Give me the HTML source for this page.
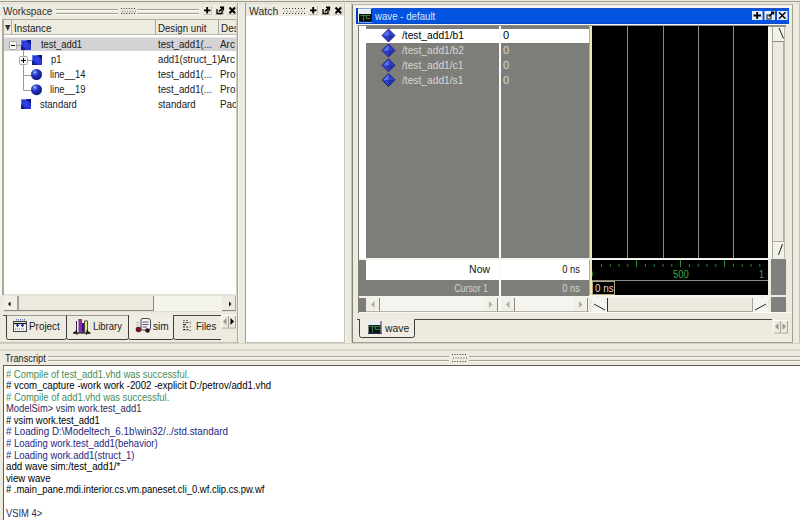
<!DOCTYPE html>
<html><head><meta charset="utf-8">
<style>
*{margin:0;padding:0;box-sizing:border-box}
html,body{width:800px;height:520px;overflow:hidden;background:#EDEADF;font-family:"Liberation Sans",sans-serif;font-size:10px;color:#000}
.a{position:absolute}
.t{position:absolute;white-space:pre;line-height:1;font-size:11px;transform-origin:0 0}
svg{position:absolute;overflow:visible}
</style></head><body>
<!-- top line -->
<div class="a" style="left:0;top:1px;width:800px;height:1px;background:#9A988C"></div>
<div class="a" style="left:0;top:3px;width:800px;height:1px;background:#E2DFD0"></div>

<!-- ===== WORKSPACE PANE ===== -->
<div class="t" style="left:3px;top:6px;color:#303030;transform:scaleX(0.9)">Workspace</div>
<svg style="left:0;top:0" width="800" height="20">
 <g stroke="#A19F92" stroke-width="1">
  <path d="M56 9.5H118M137 9.5H199M56 13.5H118M137 13.5H199"/>
 </g>
 <g stroke="#FFFFFF" stroke-width="1">
  <path d="M56 10.5H118M137 10.5H199M56 14.5H118M137 14.5H199"/>
 </g>
 <g fill="#333">
  <rect x="121" y="8" width="1" height="1"/><rect x="123.6" y="8" width="1" height="1"/><rect x="126.2" y="8" width="1" height="1"/><rect x="128.8" y="8" width="1" height="1"/><rect x="131.4" y="8" width="1" height="1"/><rect x="134" y="8" width="1" height="1"/>
  <rect x="121" y="13" width="1" height="1"/><rect x="123.6" y="13" width="1" height="1"/><rect x="126.2" y="13" width="1" height="1"/><rect x="128.8" y="13" width="1" height="1"/><rect x="131.4" y="13" width="1" height="1"/><rect x="134" y="13" width="1" height="1"/>
 </g>
 <g fill="#999">
  <rect x="122" y="10.5" width="1" height="2"/><rect x="124.6" y="10.5" width="1" height="2"/><rect x="127.2" y="10.5" width="1" height="2"/><rect x="129.8" y="10.5" width="1" height="2"/><rect x="132.4" y="10.5" width="1" height="2"/><rect x="135" y="10.5" width="1" height="2"/>
 </g>
 <!-- buttons -->
 <g id="wsbtn">
  <path d="M211.5 6V14.5H203" stroke="#C8C6BA" fill="none"/>
  <path d="M204 10.3H210.5M207.2 7V13.5" stroke="#000" stroke-width="1.8"/>
  <path d="M223.5 6V14.5H215" stroke="#C8C6BA" fill="none"/>
  <path d="M217 9V13.5H222V10" stroke="#000" stroke-width="1.3" fill="none"/>
  <path d="M219 11.5L223 7.5M220 7.3H223.3V10.5" stroke="#000" stroke-width="1.6" fill="none"/>
  <path d="M236 6V14.5H227.5" stroke="#C8C6BA" fill="none"/>
  <path d="M229.5 7.5L235 13.3M235 7.5L229.5 13.3" stroke="#000" stroke-width="2"/>
 </g>
</svg>

<!-- table -->
<div class="a" style="left:0;top:16px;width:2px;height:280px;background:#F6F5EE"></div><div class="a" style="left:2px;top:19px;width:236px;height:276px;background:#fff;border-left:2px solid #ABA99E;border-top:1px solid #AFADA0;border-right:2px solid #C9C7BA"></div>
<div class="a" style="left:4px;top:20px;width:232px;height:15px;background:#EEEBE0;border-bottom:1px solid #BDBBAE"></div>
<div class="a" style="left:11px;top:20px;width:1px;height:14px;background:#B0AEA2"></div>
<div class="a" style="left:155px;top:20px;width:1px;height:14px;background:#A8A69A"></div>
<div class="a" style="left:218px;top:20px;width:1px;height:14px;background:#A8A69A"></div>
<svg style="left:0;top:0" width="20" height="40"><path d="M5 25H10.5L7.75 31Z" fill="#333"/></svg>
<div class="t" style="left:14px;top:23px;color:#202020;transform:scaleX(0.9)">Instance</div>
<div class="t" style="left:158px;top:23px;color:#202020;transform:scaleX(0.88)">Design unit</div>
<div class="t" style="left:221px;top:23px;color:#202020;transform:scaleX(0.9)">Des</div>
<div class="a" style="left:236px;top:20px;width:2px;height:15px;background:#EDEADF"></div>

<!-- rows -->
<div class="a" style="left:4px;top:37px;width:232px;height:1px;background:#E6E4E4"></div><div class="a" style="left:4px;top:38px;width:232px;height:13px;background:#D4D2D5"></div>
<svg style="left:0;top:0" width="240" height="120">
 <defs>
  <linearGradient id="sq" x1="0" y1="0" x2="1" y2="1">
   <stop offset="0" stop-color="#6F8DF5"/><stop offset="0.35" stop-color="#2A4EE8"/><stop offset="0.7" stop-color="#1E3CD8"/><stop offset="1" stop-color="#0A1C8C"/>
  </linearGradient>
  <radialGradient id="ball" cx="0.35" cy="0.3" r="0.75">
   <stop offset="0" stop-color="#D0DCFF"/><stop offset="0.18" stop-color="#5068E0"/><stop offset="0.45" stop-color="#2232C0"/><stop offset="1" stop-color="#0C1478"/>
  </radialGradient>
  <g id="bsq">
   <rect x="0" y="0" width="10" height="10" fill="#2838D4"/>
   <path d="M0 0H10L9 1H1V9L0 10Z" fill="#6080F0"/>
   <path d="M10 0V5L5 0Z" fill="#0E1884"/>
   <path d="M0 10V5L5 10Z" fill="#12208E"/>
   <path d="M3 3H7V7H3Z" fill="#3048E8" opacity="0.7"/>
  </g>
 </defs>
 <!-- tree lines -->
 <g stroke="#9A9A96" stroke-width="1" fill="none">
  <path d="M16.5 45.5H21"/>
  <path d="M23.5 50V57"/>
  <path d="M23.5 64V90.5H31M23.5 75.5H31"/>
  <path d="M27.5 60.5H32"/>
 </g>
 <!-- minus box -->
 <rect x="9.5" y="41.5" width="7" height="8" rx="1" fill="#F6F6F2" stroke="#A9A9A2"/>
 <path d="M11 45.5H15" stroke="#000"/>
 <use href="#bsq" x="21" y="40"/>
 <!-- plus box -->
 <rect x="19.5" y="56.5" width="8" height="8" rx="1" fill="#F6F6F2" stroke="#A9A9A2"/>
 <path d="M21 60.5H26M23.5 58V63" stroke="#000"/>
 <use href="#bsq" x="32" y="55"/>
 <circle cx="36.5" cy="74.5" r="5.5" fill="url(#ball)"/>
 <circle cx="36.5" cy="89.7" r="5.5" fill="url(#ball)"/>
 <use href="#bsq" x="21" y="99"/>
</svg>
<div class="t" style="left:41px;top:39px;color:#202020;transform:scaleX(0.85)">test_add1</div>
<div class="t" style="left:51px;top:54px;color:#202020;transform:scaleX(0.85)">p1</div>
<div class="t" style="left:50px;top:69px;color:#202020;transform:scaleX(0.85)">line__14</div>
<div class="t" style="left:50px;top:84px;color:#202020;transform:scaleX(0.85)">line__19</div>
<div class="t" style="left:40px;top:99px;color:#202020;transform:scaleX(0.86)">standard</div>
<div class="t" style="left:158px;top:39px;color:#202020;transform:scaleX(0.88)">test_add1(...</div>
<div class="t" style="left:158px;top:54px;color:#202020;transform:scaleX(0.88)">add1(struct_1)</div>
<div class="t" style="left:158px;top:69px;color:#202020;transform:scaleX(0.88)">test_add1(...</div>
<div class="t" style="left:158px;top:84px;color:#202020;transform:scaleX(0.88)">test_add1(...</div>
<div class="t" style="left:158px;top:99px;color:#202020;transform:scaleX(0.88)">standard</div>
<div class="a" style="left:219px;top:37px;width:17px;height:80px;overflow:hidden">
 <div class="t" style="left:1px;top:2px;color:#202020;transform:scaleX(0.9)">Arc</div>
 <div class="t" style="left:1px;top:17px;color:#202020;transform:scaleX(0.9)">Arc</div>
 <div class="t" style="left:1px;top:32px;color:#202020;transform:scaleX(0.9)">Pro</div>
 <div class="t" style="left:1px;top:47px;color:#202020;transform:scaleX(0.9)">Pro</div>
 <div class="t" style="left:1px;top:62px;color:#202020;transform:scaleX(0.9)">Pac</div>
</div>

<!-- ws scrollbar -->
<div class="a" style="left:4px;top:294px;width:232px;height:2px;background:#E6E4DA"></div>
<div class="a" style="left:4px;top:296px;width:232px;height:15px;background:#F4F3EC"></div>
<div class="a" style="left:4px;top:296px;width:13px;height:15px;background:#F0EFE8;border-bottom:1px solid #8E8C80"></div>
<div class="a" style="left:17px;top:296px;width:137px;height:15px;background:#EDEADF;border-left:2px solid #A4A296;border-right:1px solid #8A887C;border-bottom:1px solid #8A887C"></div>
<div class="a" style="left:222px;top:296px;width:14px;height:15px;background:#EDEADF;border-right:1px solid #A8A698;border-bottom:1px solid #8A887C"></div>
<svg style="left:0;top:0" width="240" height="320"><path d="M8 304L10.5 301.5V306.5Z" fill="#000"/><path d="M231.5 304L229 301.5V306.5Z" fill="#000"/></svg>
<div class="a" style="left:2px;top:311px;width:236px;height:1px;background:#E0DED2"></div>
<!-- tabs -->
<svg style="left:0;top:0" width="240" height="345">
 <path d="M3 315.5H128" stroke="#4A4840" stroke-width="1"/>
 <path d="M173 315.5H221" stroke="#4A4840" stroke-width="1"/>
 <!-- project tab -->
 <path d="M6.5 315.5V337.5Q6.5 339.5 8.5 339.5H64.5Q66.5 339.5 66.5 337.5V315.5" fill="#EDEADF" stroke="#3E3C36"/>
 <!-- library -->
 <path d="M66.5 315.5V337.5Q66.5 339.5 68.5 339.5H126.5Q128.5 339.5 128.5 337.5V315.5" fill="#EDEADF" stroke="#3E3C36"/>
 <!-- sim (selected) -->
 <path d="M128.5 315V337.5Q128.5 339.5 130.5 339.5H171.5Q173.5 339.5 173.5 337.5V315" fill="#F0EEE4" stroke="#3E3C36"/>
 <!-- files -->
 <path d="M173.5 315.5V337.5Q173.5 339.5 175.5 339.5H221" fill="#EDEADF" stroke="#3E3C36"/>
 <!-- project icon -->
 <g>
  <rect x="13.5" y="321.5" width="13" height="10" fill="#F4F4F0" stroke="#444"/>
  <rect x="16" y="319" width="1" height="1.5" fill="#6A76C0"/><rect x="18" y="319" width="1" height="1.5" fill="#6A76C0"/><rect x="20" y="319" width="1" height="1.5" fill="#6A76C0"/><rect x="22" y="319" width="1" height="1.5" fill="#6A76C0"/><rect x="24" y="319" width="1" height="1.5" fill="#6A76C0"/>
  <path d="M14 323.5H26" stroke="#111" stroke-width="1.2"/>
  <circle cx="17.5" cy="325.3" r="1.2" fill="#1A2A9A"/><circle cx="22.5" cy="325.3" r="1.2" fill="#1A2A9A"/>
  <path d="M17.5 323V327M22.5 323V327" stroke="#1A2A9A" stroke-width="1"/>
  <path d="M15 329H25" stroke="#99A" stroke-width="1.5" stroke-dasharray="1 1"/>
 </g>
 <!-- library icon -->
 <g>
  <rect x="76" y="321" width="2.5" height="11.5" fill="#F0ECF4"/>
  <path d="M76.5 321V332" stroke="#2A2A40" stroke-width="1"/>
  <rect x="78.5" y="319" width="3.5" height="13.5" fill="#902A9A"/>
  <rect x="78.5" y="319" width="3.5" height="1.5" fill="#A03070"/>
  <rect x="82" y="323" width="2.5" height="9.5" fill="#2A1890"/>
  <rect x="84.5" y="321" width="3" height="11.5" fill="#E8E880"/>
  <path d="M84.5 321V332.5M87.5 321V332.5M84.5 320.8H87.5" stroke="#303030" stroke-width="0.8" fill="none"/>
  <path d="M73 333.5L77 329.5V333.5ZM90.5 333.5L86.5 329.5V333.5Z" fill="#111"/>
  <path d="M73 333H90.5" stroke="#111" stroke-width="1.2"/>
  <path d="M77 333V335M86.5 333V335" stroke="#222" stroke-width="1"/>
 </g>
 <!-- sim icon -->
 <g>
  <path d="M141 320Q141 318.5 143 318.5H148Q150.5 318.5 150.5 321V328.5Q150.5 330 149 330H141Z" fill="#F2F2F8" stroke="#3A3A3A" stroke-width="0.9"/>
  <path d="M142.5 322H148.5M142.5 324.5H148.5M142.5 327H147" stroke="#5A5A6A" stroke-width="1"/>
  <path d="M136.5 322.5H138.5M136.5 325H138.5M136.5 327.5H138.5" stroke="#9A9A9A" stroke-width="0.9"/>
  <circle cx="138.5" cy="329.5" r="2.8" fill="#6A1828"/>
  <circle cx="147.5" cy="330.5" r="2.3" fill="#2E161A"/>
 </g>
 <!-- files icon -->
 <g>
  <rect x="183" y="320" width="2" height="1" fill="#777"/><rect x="186" y="320" width="2" height="1" fill="#777"/>
  <rect x="183" y="322" width="1.5" height="1" fill="#555"/><rect x="185.5" y="322" width="3" height="1" fill="#444"/><rect x="189.5" y="321.5" width="1.5" height="1.5" fill="#999"/>
  <rect x="183" y="324" width="3" height="1.2" fill="#222"/><rect x="189.5" y="323.5" width="1.5" height="1" fill="#AAA"/>
  <rect x="183" y="326" width="2" height="2" fill="#888"/><rect x="186" y="326" width="2" height="2" fill="#888"/><rect x="189" y="326" width="2" height="2" fill="#BBB"/>
  <rect x="183" y="329" width="2.5" height="1.2" fill="#333"/><rect x="186.5" y="329" width="2" height="1.2" fill="#333"/><rect x="189.5" y="330" width="1.5" height="1" fill="#666"/>
 </g>
 <!-- tab scroll arrows -->
 <rect x="221.5" y="315.5" width="7" height="12" fill="#EDEADF" stroke="#fff"/>
 <rect x="228.5" y="315.5" width="7" height="12" fill="#EDEADF" stroke="#fff"/>
 <path d="M228.5 316V328H222M235.5 316V328H229" stroke="#A8A698" fill="none"/>
 <path d="M223 321.5L226.5 318V325Z" fill="#9A988C"/>
 <path d="M234 321.5L230.5 318V325Z" fill="#000"/>
</svg>
<div class="t" style="left:29px;top:321px;color:#202020;transform:scaleX(0.9)">Project</div>
<div class="t" style="left:93px;top:321px;color:#202020;transform:scaleX(0.86)">Library</div>
<div class="t" style="left:153px;top:321px;color:#202020;transform:scaleX(0.92)">sim</div>
<div class="t" style="left:196px;top:321px;color:#202020;transform:scaleX(0.87)">Files</div>
<div class="a" style="left:236px;top:19px;width:1px;height:275px;background:#CFCDC0"></div><div class="a" style="left:237px;top:3px;width:1px;height:339px;background:#A9A79A"></div><div class="a" style="left:238px;top:3px;width:1px;height:339px;background:#F8F6EC"></div>
<div class="a" style="left:0;top:342px;width:239px;height:1px;background:#C4C2B4"></div>

<!-- ===== WATCH PANE ===== -->
<div class="a" style="left:245px;top:3px;width:100px;height:340px;border-left:1px solid #A19F92;border-right:1px solid #C4C2B4;border-bottom:1px solid #C4C2B4"></div>
<div class="a" style="left:246px;top:16px;width:98px;height:326px;background:#fff"></div>
<div class="t" style="left:249px;top:6px;color:#303030;transform:scaleX(0.95)">Watch</div>
<svg style="left:0;top:0" width="360" height="20">
 <g fill="#333">
  <rect x="283" y="8" width="1" height="1"/><rect x="286" y="8" width="1" height="1"/><rect x="289" y="8" width="1" height="1"/><rect x="292" y="8" width="1" height="1"/><rect x="295" y="8" width="1" height="1"/><rect x="298" y="8" width="1" height="1"/><rect x="301" y="8" width="1" height="1"/><rect x="304" y="8" width="1" height="1"/>
  <rect x="283" y="13" width="1" height="1"/><rect x="286" y="13" width="1" height="1"/><rect x="289" y="13" width="1" height="1"/><rect x="292" y="13" width="1" height="1"/><rect x="295" y="13" width="1" height="1"/><rect x="298" y="13" width="1" height="1"/><rect x="301" y="13" width="1" height="1"/><rect x="304" y="13" width="1" height="1"/>
 </g>
 <g fill="#AAA">
  <rect x="284" y="10.5" width="1" height="2"/><rect x="287" y="10.5" width="1" height="2"/><rect x="290" y="10.5" width="1" height="2"/><rect x="293" y="10.5" width="1" height="2"/><rect x="296" y="10.5" width="1" height="2"/><rect x="299" y="10.5" width="1" height="2"/><rect x="302" y="10.5" width="1" height="2"/>
 </g>
 <use href="#wsbtn" x="106" y="0"/>
</svg>

<!-- ===== WAVE PANE ===== -->
<div class="a" style="left:351px;top:3px;width:1px;height:339px;background:#C8C6B8"></div><div class="a" style="left:352px;top:4px;width:441px;height:339px;border-left:1px solid #858378;border-right:1px solid #A19F92;border-bottom:1px solid #A19F92;border-top:1px solid #C0BEB2"></div><div class="a" style="left:345px;top:3px;width:1px;height:339px;background:#F8F6EC"></div>
<div class="a" style="left:354px;top:6px;width:437px;height:2px;background:#F6F6F2"></div>
<div class="a" style="left:356px;top:8px;width:433px;height:16px;background:#0454E2;border-left:2px solid #0640B8;border-top:1px solid #1A52C4;border-bottom:1px solid #0A4AC8"></div><div class="a" style="left:354px;top:24px;width:437px;height:1px;background:#F6F7F4"></div>
<svg style="left:0;top:0" width="800" height="30">
 <rect x="358.5" y="9" width="13" height="13" fill="#E8ECF4" stroke="#F8F8F8"/>
 <rect x="359" y="14" width="12" height="7" fill="#041208"/>
 <path d="M360.5 15.5H363.5M363.5 14.5V20.5M364 15.5H370M366.5 15.5V18.5H370" stroke="#3E7E4E" stroke-width="1" fill="none"/>
 <path d="M359 21.5H372M371.5 9V22" stroke="#061A50" stroke-width="1"/>
 <!-- wave buttons -->
 <rect x="752" y="11" width="10.5" height="9" fill="#E4ECFA"/>
 <rect x="764.5" y="11" width="10.5" height="9" fill="#E4ECFA"/>
 <rect x="777" y="11" width="10.5" height="9" fill="#E4ECFA"/>
 <path d="M753.5 15.5H761M757.2 12V19" stroke="#000" stroke-width="1.8"/>
 <rect x="767" y="15" width="4" height="4" fill="none" stroke="#333" stroke-width="1.2"/>
 <path d="M769 16.5L773 12.5M771 12.2H773.5V14.5" stroke="#000" stroke-width="1.6" fill="none"/>
 <path d="M779 12.3L785.5 18.8M785.5 12.3L779 18.8" stroke="#000" stroke-width="1.4"/>
</svg>
<div class="t" style="left:375px;top:11px;color:#DCE6F8;transform:scaleX(0.88)">wave - default</div>

<!-- wave content frame -->
<div class="a" style="left:358px;top:25px;width:428px;height:1px;background:#8E8C80"></div>
<div class="a" style="left:358px;top:25px;width:1px;height:288px;background:#7E7C72"></div>
<!-- names -->
<div class="a" style="left:359px;top:26px;width:230px;height:232px;background:#7D7E7A"></div>
<div class="a" style="left:359px;top:26px;width:7px;height:232px;background:#fff"></div>
<div class="a" style="left:366px;top:29px;width:133px;height:14px;background:#fff"></div>
<div class="a" style="left:501px;top:29px;width:88px;height:14px;background:#fff"></div>
<div class="a" style="left:499px;top:26px;width:2px;height:286px;background:#FAFAF8"></div>
<div class="a" style="left:589px;top:26px;width:3px;height:232px;background:#EFE6B8;border-left:1px solid #B0AE9E"></div>
<svg style="left:0;top:0" width="800" height="100">
 <defs>
  <linearGradient id="dia" x1="0" y1="0" x2="0" y2="1">
   <stop offset="0" stop-color="#8CA8FF"/><stop offset="0.5" stop-color="#3858E0"/><stop offset="1" stop-color="#1A2A9A"/>
  </linearGradient>
  <g id="dm"><path d="M0 -6.5L6.5 0L0 6.5L-6.5 0Z" fill="#3040CC"/><path d="M-5.5 0L0 -5.5L0 0Z" fill="#5A74EE"/><path d="M5.5 0L0 5.5L0 0Z" fill="#2230A8"/><path d="M0 -6.5L6.5 0L0 6.5L-6.5 0Z" fill="none" stroke="#1A1E6A" stroke-width="0.9"/></g>
 </defs>
 <use href="#dm" x="388.5" y="35.5"/>
 <use href="#dm" x="388.5" y="50.5"/>
 <use href="#dm" x="388.5" y="65.3"/>
 <use href="#dm" x="388.5" y="80"/>
</svg>
<div class="t" style="left:402px;top:30px;color:#000;transform:scaleX(0.93)">/test_add1/b1</div>
<div class="t" style="left:402px;top:45px;color:#D6D6D0;transform:scaleX(0.93)">/test_add1/b2</div>
<div class="t" style="left:402px;top:60px;color:#D6D6D0;transform:scaleX(0.93)">/test_add1/c1</div>
<div class="t" style="left:402px;top:75px;color:#D6D6D0;transform:scaleX(0.93)">/test_add1/s1</div>
<div class="t" style="left:503px;top:30px;color:#000">0</div>
<div class="t" style="left:503px;top:45px;color:#D6D6D0">0</div>
<div class="t" style="left:503px;top:60px;color:#D6D6D0">0</div>
<div class="t" style="left:503px;top:75px;color:#D6D6D0">0</div>

<!-- now / cursor rows -->
<div class="a" style="left:359px;top:258px;width:230px;height:2px;background:#F4F3EE"></div>
<div class="a" style="left:359px;top:260px;width:230px;height:36px;background:#7D7E7A"></div>
<div class="a" style="left:366px;top:260px;width:133px;height:20px;background:#fff"></div>
<div class="a" style="left:501px;top:260px;width:88px;height:20px;background:#fff"></div>
<div class="t" style="left:440px;top:264px;width:50px;text-align:right;color:#101010;transform:scaleX(0.95);transform-origin:100% 0">Now</div>
<div class="t" style="left:519px;top:264px;width:61px;text-align:right;color:#101010;transform:scaleX(0.85);transform-origin:100% 0">0 ns</div>
<div class="t" style="left:418px;top:283px;width:70px;text-align:right;color:#D6D6D0;transform:scaleX(0.8);transform-origin:100% 0">Cursor 1</div>
<div class="t" style="left:519px;top:283px;width:61px;text-align:right;color:#D6D6D0;transform:scaleX(0.85);transform-origin:100% 0">0 ns</div>
<div class="a" style="left:499px;top:258px;width:2px;height:54px;background:#FAFAF8"></div>
<!-- name/value scrollbars -->
<div class="a" style="left:359px;top:296px;width:230px;height:2px;background:#F4F3EE"></div>
<div class="a" style="left:359px;top:298px;width:7px;height:14px;background:#7D7E7A"></div>
<div class="a" style="left:366px;top:298px;width:133px;height:14px;background:#F5F4EE"></div>
<div class="a" style="left:501px;top:298px;width:88px;height:14px;background:#F5F4EE"></div>
<div class="a" style="left:366px;top:298px;width:14px;height:14px;background:#F0EFE8;border-right:1px solid #8A887C;border-bottom:1px solid #8A887C"></div>
<div class="a" style="left:484px;top:298px;width:14px;height:14px;background:#F0EFE8;border-right:1px solid #8A887C;border-bottom:1px solid #8A887C"></div>
<div class="a" style="left:501px;top:298px;width:14px;height:14px;background:#F0EFE8;border-right:1px solid #8A887C;border-bottom:1px solid #8A887C"></div>
<div class="a" style="left:574px;top:298px;width:14px;height:14px;background:#F0EFE8;border-right:1px solid #8A887C;border-bottom:1px solid #8A887C"></div>
<svg style="left:0;top:0" width="800" height="320">
 <g fill="#B0AEA2">
  <path d="M371 304.5L374.5 301V308Z"/><path d="M492.5 304.5L489 301V308Z"/>
  <path d="M506 304.5L509.5 301V308Z"/><path d="M582.5 304.5L579 301V308Z"/>
 </g>
</svg>
<div class="a" style="left:366px;top:311px;width:223px;height:1px;background:#B4B2A6"></div><div class="a" style="left:359px;top:312px;width:433px;height:1px;background:#FAF9F4"></div>

<!-- waveform window -->
<div class="a" style="left:592px;top:26px;width:176px;height:232px;background:#000"></div>
<div class="a" style="left:627px;top:26px;width:1px;height:232px;background:#8A8A8A"></div>
<div class="a" style="left:663px;top:26px;width:1px;height:232px;background:#8A8A8A"></div>
<div class="a" style="left:698px;top:26px;width:1px;height:232px;background:#8A8A8A"></div>
<div class="a" style="left:733px;top:26px;width:1px;height:232px;background:#8A8A8A"></div>
<div class="a" style="left:589px;top:258px;width:181px;height:2px;background:#F4F3EE"></div>
<div class="a" style="left:592px;top:260px;width:176px;height:20px;background:#000"></div>
<div class="a" style="left:589px;top:260px;width:3px;height:36px;background:#EFE6B8;border-left:1px solid #B0AE9E"></div>
<svg style="left:0;top:0" width="800" height="300">
 <g stroke="#2E8A3A" stroke-width="1">
  <path d="M601.5 264V267M610.3 264V267M619 264V267M627.8 264V267M645.4 264V267M654.2 264V267M663 264V267M671.8 264V267M689.4 264V267M698.2 264V267M707 264V267M715.8 264V267M733.4 264V267M742.2 264V267M751 264V267M759.8 264V267"/>
  <path d="M636.5 260V267M680.5 260V267M724.5 260V267"/>
 </g>
</svg>
<div class="a" style="left:592px;top:260px;width:176px;height:20px;overflow:hidden">
 <div class="t" style="left:-5px;top:9px;color:#3AA84A">0</div>
 <div class="t" style="left:81px;top:9px;color:#3AA84A;transform:scaleX(0.86)">500</div>
 <div class="t" style="left:167px;top:9px;color:#3AA84A;transform:scaleX(0.8)">1</div>
</div>
<div class="a" style="left:592px;top:280px;width:176px;height:1px;background:#8A8A8A"></div>
<div class="a" style="left:592px;top:281px;width:176px;height:14px;background:#000"></div>
<div class="a" style="left:592px;top:281px;width:23px;height:14px;border:1px solid #B8A878"></div>
<div class="t" style="left:595px;top:283px;color:#E0D8C0;transform:scaleX(0.9)">0 ns</div>
<div class="a" style="left:589px;top:295px;width:181px;height:3px;background:#F4F3EE"></div>
<!-- wave h scrollbar -->
<div class="a" style="left:592px;top:298px;width:176px;height:14px;background:#F5F4EE"></div>
<div class="a" style="left:607px;top:298px;width:146px;height:14px;background:#EDEADF;border-left:1px solid #333;border-right:1px solid #A8A698;border-bottom:1px solid #A8A698"></div>
<svg style="left:0;top:0" width="800" height="320">
 <path d="M594 304L605 310" stroke="#222" stroke-width="1"/>
 <path d="M755 310L766 304" stroke="#222" stroke-width="1"/>
</svg>
<!-- vertical scrollbar -->
<div class="a" style="left:768px;top:26px;width:18px;height:1px;background:#9A988C"></div>
<div class="a" style="left:768px;top:27px;width:4px;height:231px;background:#F8F7F2"></div>
<div class="a" style="left:772px;top:27px;width:1px;height:231px;background:#A8A698"></div>
<div class="a" style="left:773px;top:27px;width:12px;height:231px;background:#F2F1EA"></div>
<div class="a" style="left:773px;top:41px;width:11px;height:201px;background:#EDEADF;border-top:1px solid #8E8C80;border-right:1px solid #B0AEA2;border-bottom:1px solid #B0AEA2"></div>
<div class="a" style="left:784px;top:27px;width:1px;height:231px;background:#B8B6A8"></div>
<svg style="left:0;top:0" width="800" height="300">
 <path d="M779 28L783.5 38.5" stroke="#222" stroke-width="1"/>
 <path d="M778.5 255L782.5 244" stroke="#222" stroke-width="1"/>
</svg>
<div class="a" style="left:771px;top:259px;width:15px;height:36px;background:#808080"></div>
<div class="a" style="left:771px;top:297px;width:15px;height:15px;background:#808080"></div>

<!-- wave tabs -->
<svg style="left:0;top:0" width="800" height="345">
 <path d="M357 319.5H360M414.5 319.5H772" stroke="#4A4840" stroke-width="1"/>
 <path d="M359.5 319.5V335.5Q359.5 337.5 361.5 337.5H412.5Q414.5 337.5 414.5 335.5V319.5" fill="#F0EEE4" stroke="#3E3C36"/>
 <rect x="368" y="321" width="13" height="13" fill="#E8ECF4"/>
 <rect x="368.5" y="325" width="12" height="8" fill="#061810"/>
 <path d="M369.5 326.5H372.5M372.5 325.5V332.5M373 326.5H380M375.5 326.5V329.5H380" stroke="#3E7E4E" stroke-width="1" fill="none"/>
 <path d="M368 333.5H381.5M381 321V334" stroke="#2A2A5A" stroke-width="1"/>
 <!-- tab arrows -->
 <rect x="773.5" y="320.5" width="7" height="12" fill="#EDEADF" stroke="#fff"/>
 <rect x="780.5" y="320.5" width="7" height="12" fill="#EDEADF" stroke="#fff"/>
 <path d="M780.5 321V333H774M787.5 321V333H781" stroke="#A8A698" fill="none"/>
 <path d="M775 326.5L778.5 323V330Z" fill="#9A988C"/>
 <path d="M786 326.5L782.5 323V330Z" fill="#9A988C"/>
</svg>
<div class="t" style="left:385px;top:323px;color:#202020;transform:scaleX(0.94)">wave</div>
<div class="a" style="left:799px;top:3px;width:1px;height:340px;background:#C4C2B4"></div>

<!-- ===== TRANSCRIPT ===== -->
<div class="a" style="left:0;top:343px;width:800px;height:1px;background:#D4D2C4"></div>
<div class="a" style="left:0;top:349px;width:800px;height:2px;background:#D6D4C6"></div>
<div class="t" style="left:5px;top:353px;color:#202020;transform:scaleX(0.84)">Transcript</div>
<svg style="left:0;top:0" width="800" height="370">
 <g stroke="#A8A698" stroke-width="1"><path d="M48 356.5H449M469 356.5H800M48 360.5H449M469 360.5H800"/></g>
 <g stroke="#F6F5EE" stroke-width="1"><path d="M48 357.5H449M469 357.5H800M48 361.5H449M469 361.5H800"/></g>
 <g fill="#333">
  <rect x="452" y="354" width="1" height="1"/><rect x="454.6" y="354" width="1" height="1"/><rect x="457.2" y="354" width="1" height="1"/><rect x="459.8" y="354" width="1" height="1"/><rect x="462.4" y="354" width="1" height="1"/><rect x="465" y="354" width="1" height="1"/>
  <rect x="452" y="361" width="1" height="1"/><rect x="454.6" y="361" width="1" height="1"/><rect x="457.2" y="361" width="1" height="1"/><rect x="459.8" y="361" width="1" height="1"/><rect x="462.4" y="361" width="1" height="1"/><rect x="465" y="361" width="1" height="1"/>
 </g>
 <g fill="#A0A098"><rect x="453" y="357" width="1" height="2"/><rect x="455.6" y="357" width="1" height="2"/><rect x="458.2" y="357" width="1" height="2"/><rect x="460.8" y="357" width="1" height="2"/><rect x="463.4" y="357" width="1" height="2"/><rect x="466" y="357" width="1" height="2"/></g>
</svg>
<div class="a" style="left:3px;top:365px;width:797px;height:155px;background:#fff;border-left:1px solid #5E5C54;border-top:1px solid #5E5C54"></div>
<div class="a" style="left:6px;top:368.6px;width:790px;height:152px;font-size:11px;line-height:11.58px;white-space:pre"><div style="color:#468E56;transform:scaleX(0.857);transform-origin:0 0"># Compile of test_add1.vhd was successful.</div><div style="color:#000;transform:scaleX(0.878);transform-origin:0 0"># vcom_capture -work work -2002 -explicit D:/petrov/add1.vhd</div><div style="color:#468E56;transform:scaleX(0.859);transform-origin:0 0"># Compile of add1.vhd was successful.</div><div style="color:#2A2A5C;transform:scaleX(0.854);transform-origin:0 0">ModelSim&gt; vsim work.test_add1</div><div style="color:#000;transform:scaleX(0.857);transform-origin:0 0"># vsim work.test_add1</div><div style="color:#26267E;transform:scaleX(0.894);transform-origin:0 0"># Loading D:\Modeltech_6.1b\win32/../std.standard</div><div style="color:#26267E;transform:scaleX(0.864);transform-origin:0 0"># Loading work.test_add1(behavior)</div><div style="color:#26267E;transform:scaleX(0.865);transform-origin:0 0"># Loading work.add1(struct_1)</div><div style="color:#000;transform:scaleX(0.886);transform-origin:0 0">add wave sim:/test_add1/*</div><div style="color:#000;transform:scaleX(0.878);transform-origin:0 0">view wave</div><div style="color:#000;transform:scaleX(0.857);transform-origin:0 0"># .main_pane.mdi.interior.cs.vm.paneset.cli_0.wf.clip.cs.pw.wf</div><div style="color:#000;transform:scaleX(0.878);transform-origin:0 0"> </div><div style="color:#2A2A5C;transform:scaleX(0.853);transform-origin:0 0">VSIM 4&gt;</div></div>
</body></html>
